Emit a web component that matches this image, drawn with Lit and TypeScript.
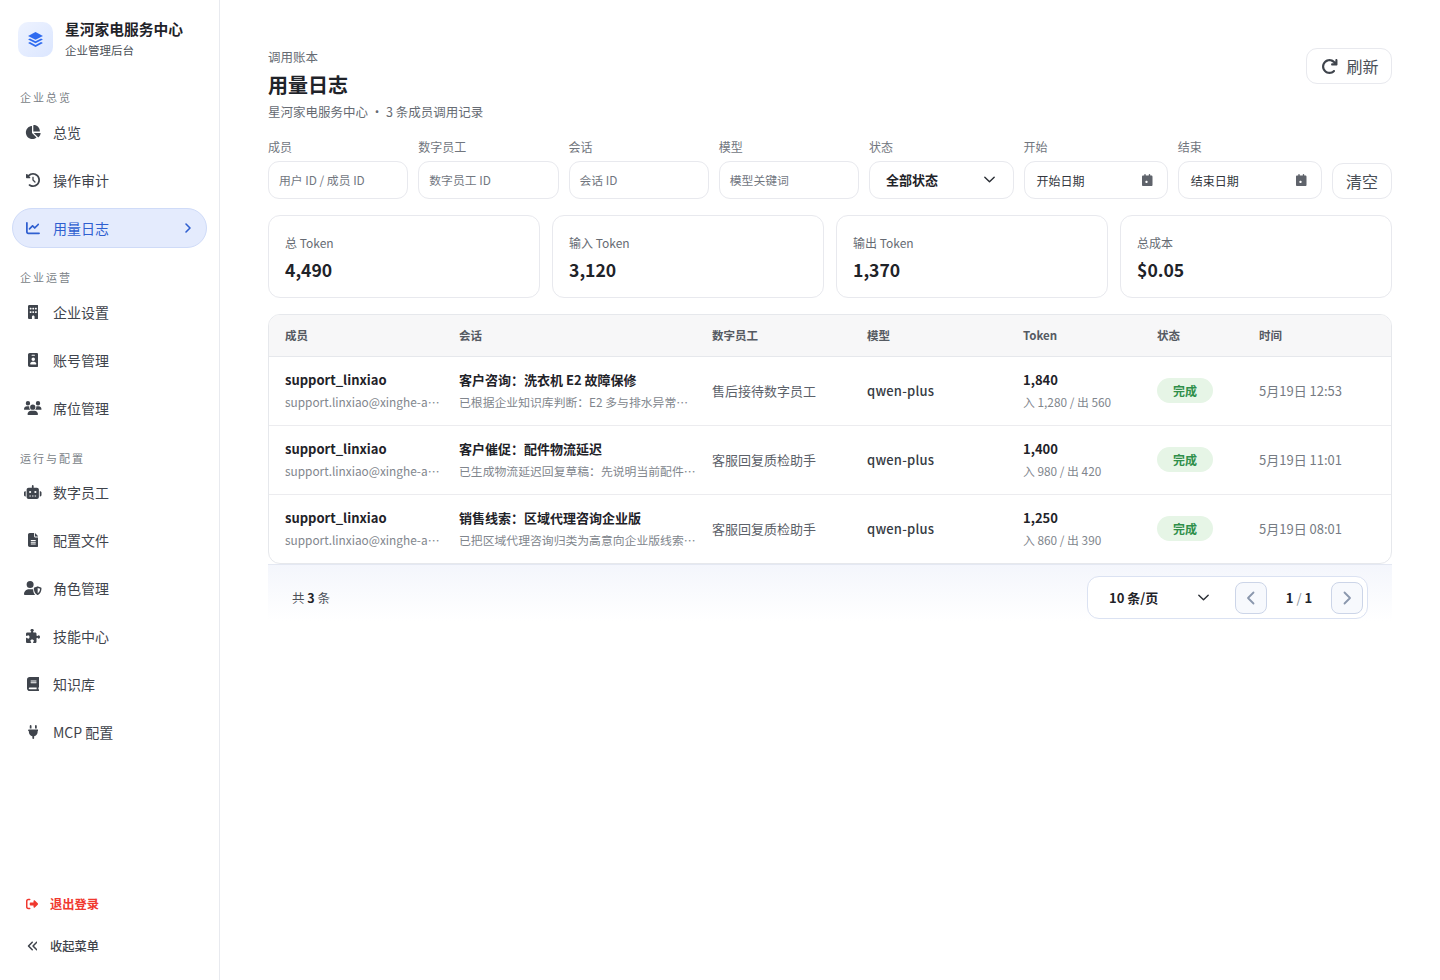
import { LitElement, html, css } from 'lit';
import { customElement } from 'lit/decorators.js';

// [viewBox width, path], all on a 512 high box
const icons: Record<string, [number, string]> = {
  pie: [576, 'M304 240V16.600c0-9 7-16.600 16-16.600C443.700 0 544 100.300 544 224c0 9-7.600 16-16.600 16H304zM32 272C32 150.700 122.100 50.300 239 34.300c9.200-1.300 17 6.100 17 15.400V288L412.500 444.500c6.700 6.700 6.200 17.700-1.500 23.100C371.800 495.600 323.800 512 272 512C139.500 512 32 404.600 32 272zm526.400 16c9.300 0 16.600 7.800 15.400 17c-7.700 55.900-34.600 105.600-73.900 142.300c-6 5.600-15.400 5.200-21.200-.7L320 288H558.400z'],
  history: [512, 'M75 75L41 41C25.900 25.900 0 36.600 0 57.900V168c0 13.300 10.700 24 24 24H134.100c21.400 0 32.100-25.900 17-41l-30.800-30.800C155 85.500 203 64 256 64c106 0 192 86 192 192s-86 192-192 192c-40.800 0-78.600-12.700-109.700-34.400c-14.500-10.100-34.400-6.600-44.600 7.900s-6.600 34.400 7.900 44.600C151.200 495 201.700 512 256 512c141.400 0 256-114.600 256-256S397.400 0 256 0C185.300 0 121.300 28.700 75 75zm181 53c-13.300 0-24 10.700-24 24V256c0 6.400 2.500 12.500 7 17l72 72c9.400 9.400 24.600 9.400 33.900 0s9.400-24.600 0-33.900l-65-65V152c0-13.300-10.700-24-24-24z'],
  chart: [512, 'M64 64c0-17.700-14.300-32-32-32S0 46.300 0 64V400c0 44.200 35.800 80 80 80H480c17.700 0 32-14.300 32-32s-14.300-32-32-32H80c-8.800 0-16-7.200-16-16V64zm406.600 86.600c12.500-12.500 12.500-32.800 0-45.300s-32.800-12.500-45.300 0L320 210.700l-57.400-57.400c-12.500-12.500-32.800-12.500-45.300 0l-112 112c-12.500 12.500-12.500 32.800 0 45.300s32.800 12.500 45.300 0L240 221.300l57.400 57.400c12.500 12.500 32.800 12.500 45.300 0l128-128z'],
  building: [384, 'M48 0C21.500 0 0 21.500 0 48V464c0 26.500 21.500 48 48 48h96V432c0-26.500 21.500-48 48-48s48 21.500 48 48v80h96c26.500 0 48-21.500 48-48V48c0-26.500-21.500-48-48-48H48zM64 240c0-8.800 7.200-16 16-16h32c8.800 0 16 7.200 16 16v32c0 8.800-7.200 16-16 16H80c-8.800 0-16-7.200-16-16V240zm112-16h32c8.800 0 16 7.200 16 16v32c0 8.800-7.200 16-16 16H176c-8.800 0-16-7.200-16-16V240c0-8.800 7.200-16 16-16zm80 16c0-8.800 7.200-16 16-16h32c8.800 0 16 7.200 16 16v32c0 8.800-7.200 16-16 16H272c-8.800 0-16-7.200-16-16V240zM80 96h32c8.800 0 16 7.200 16 16v32c0 8.800-7.200 16-16 16H80c-8.800 0-16-7.200-16-16V112c0-8.800 7.200-16 16-16zm80 16c0-8.800 7.200-16 16-16h32c8.800 0 16 7.200 16 16v32c0 8.800-7.200 16-16 16H176c-8.800 0-16-7.200-16-16V112zM272 96h32c8.800 0 16 7.200 16 16v32c0 8.800-7.200 16-16 16H272c-8.800 0-16-7.200-16-16V112c0-8.800 7.200-16 16-16z'],
  badge: [384, 'M64 0C28.700 0 0 28.700 0 64V448c0 35.300 28.700 64 64 64H320c35.300 0 64-28.700 64-64V64c0-35.300-28.700-64-64-64H64zm96 320h64c44.200 0 80 35.800 80 80c0 8.800-7.200 16-16 16H96c-8.800 0-16-7.200-16-16c0-44.200 35.800-80 80-80zm-32-96a64 64 0 1 1 128 0 64 64 0 1 1 -128 0zM144 64h96c8.800 0 16 7.200 16 16s-7.200 16-16 16H144c-8.800 0-16-7.200-16-16s7.200-16 16-16z'],
  users: [640, 'M144 0a80 80 0 1 1 0 160A80 80 0 1 1 144 0zM512 0a80 80 0 1 1 0 160A80 80 0 1 1 512 0zM0 298.700C0 239.800 47.800 192 106.700 192h42.700c15.900 0 31 3.500 44.600 9.700c-1.300 7.200-1.900 14.700-1.900 22.300c0 38.200 16.800 72.500 43.300 96c-.2 0-.4 0-.7 0H21.300C9.600 320 0 310.400 0 298.700zM405.300 320c-.2 0-.4 0-.7 0c26.600-23.500 43.300-57.800 43.300-96c0-7.600-.7-15-1.900-22.300c13.600-6.300 28.700-9.700 44.600-9.700h42.700C592.200 192 640 239.800 640 298.700c0 11.800-9.600 21.300-21.300 21.300H405.300zM224 224a96 96 0 1 1 192 0 96 96 0 1 1 -192 0zM128 485.300C128 411.700 187.700 352 261.300 352H378.700C452.300 352 512 411.700 512 485.300c0 14.700-11.900 26.700-26.700 26.700H154.700c-14.700 0-26.700-11.900-26.700-26.700z'],
  robot: [640, 'M320 0c17.700 0 32 14.300 32 32V96H472c39.800 0 72 32.200 72 72V440c0 39.800-32.200 72-72 72H168c-39.800 0-72-32.200-72-72V168c0-39.800 32.200-72 72-72H288V32c0-17.700 14.300-32 32-32zM208 384c-8.800 0-16 7.200-16 16s7.200 16 16 16h32c8.800 0 16-7.200 16-16s-7.200-16-16-16H208zm96 0c-8.800 0-16 7.200-16 16s7.200 16 16 16h32c8.800 0 16-7.200 16-16s-7.200-16-16-16H304zm96 0c-8.800 0-16 7.200-16 16s7.200 16 16 16h32c8.800 0 16-7.200 16-16s-7.200-16-16-16H400zM264 256a40 40 0 1 0 -80 0 40 40 0 1 0 80 0zm152 40a40 40 0 1 0 0-80 40 40 0 1 0 0 80zM48 224H64V416H48c-26.500 0-48-21.500-48-48V272c0-26.500 21.500-48 48-48zm544 0c26.500 0 48 21.500 48 48v96c0 26.500-21.500 48-48 48H576V224h16z'],
  file: [384, 'M64 0C28.700 0 0 28.700 0 64V448c0 35.300 28.700 64 64 64H320c35.300 0 64-28.700 64-64V160H256c-17.700 0-32-14.300-32-32V0H64zM256 0V128H384L256 0zM112 256H272c8.800 0 16 7.200 16 16s-7.200 16-16 16H112c-8.800 0-16-7.200-16-16s7.200-16 16-16zm0 64H272c8.800 0 16 7.200 16 16s-7.200 16-16 16H112c-8.800 0-16-7.200-16-16s7.200-16 16-16zm0 64H272c8.800 0 16 7.200 16 16s-7.200 16-16 16H112c-8.800 0-16-7.200-16-16s7.200-16 16-16z'],
  userShield: [640, 'M224 256A128 128 0 1 0 224 0a128 128 0 1 0 0 256zM178 304C80 304 0 384 0 482c0 16 13 30 30 30H410c-44-42-74-112-74-200v-8H178zM488 198a32 32 0 0 1 24 0l108 44c12 5 20 16 20 30 0 90-40 190-128 236a32 32 0 0 1-24 0C400 462 360 362 360 272c0-14 8-25 20-30zm12 62v190c52-30 84-92 88-168z'],
  puzzle: [512, 'M192 104.800c0-9.200-5.800-17.300-13.200-22.800C167.200 73.300 160 61.300 160 48c0-26.500 28.700-48 64-48s64 21.500 64 48c0 13.300-7.200 25.300-18.800 34c-7.400 5.500-13.200 13.600-13.200 22.800c0 12.800 10.400 23.200 23.200 23.200H336c26.500 0 48 21.500 48 48v56.800c0 12.800 10.400 23.200 23.200 23.200c9.200 0 17.300-5.800 22.800-13.200c8.700-11.600 20.700-18.800 34-18.800c26.500 0 48 28.700 48 64s-21.500 64-48 64c-13.300 0-25.300-7.200-34-18.800c-5.500-7.400-13.600-13.200-22.800-13.200c-12.800 0-23.200 10.400-23.200 23.200V464c0 26.500-21.500 48-48 48H279.200c-12.800 0-23.200-10.400-23.200-23.200c0-9.200 5.800-17.300 13.200-22.800c11.600-8.700 18.800-20.700 18.800-34c0-26.500-28.700-48-64-48s-64 21.500-64 48c0 13.300 7.200 25.300 18.800 34c7.400 5.500 13.200 13.600 13.200 22.800c0 12.800-10.400 23.200-23.200 23.200H48c-26.500 0-48-21.500-48-48V343.200C0 330.400 10.400 320 23.200 320c9.200 0 17.300 5.800 22.800 13.200C54.700 344.800 66.700 352 80 352c26.500 0 48-28.700 48-64s-21.500-64-48-64c-13.300 0-25.300 7.200-34 18.800C40.500 250.200 32.400 256 23.200 256C10.400 256 0 245.600 0 232.800V176c0-26.500 21.500-48 48-48H168.800c12.800 0 23.200-10.400 23.200-23.200z'],
  book: [448, 'M96 0C43 0 0 43 0 96V416c0 53 43 96 96 96H384h32c17.700 0 32-14.300 32-32s-14.300-32-32-32V384c17.700 0 32-14.300 32-32V32c0-17.700-14.300-32-32-32H384 96zm0 384H352v64H96c-17.700 0-32-14.300-32-32s14.300-32 32-32zm32-240c0-8.800 7.200-16 16-16H336c8.800 0 16 7.200 16 16s-7.200 16-16 16H144c-8.800 0-16-7.200-16-16zm16 48H336c8.800 0 16 7.200 16 16s-7.200 16-16 16H144c-8.800 0-16-7.200-16-16s7.200-16 16-16z'],
  plug: [384, 'M96 0C78.300 0 64 14.300 64 32v96h64V32c0-17.700-14.300-32-32-32zM288 0c-17.700 0-32 14.300-32 32v96h64V32c0-17.700-14.300-32-32-32zM32 160c-17.700 0-32 14.300-32 32s14.300 32 32 32v32c0 77.400 55 142 128 156.800V480c0 17.700 14.300 32 32 32s32-14.300 32-32V412.800C297 398 352 333.400 352 256V224c17.700 0 32-14.300 32-32s-14.300-32-32-32H32z'],
  logout: [512, 'M377.900 105.900L500.700 228.700c7.200 7.200 11.300 17.100 11.300 27.300s-4.100 20.100-11.300 27.300L377.900 406.100c-6.400 6.400-15 9.900-24 9.900c-18.700 0-33.900-15.200-33.900-33.900l0-62.100-128 0c-17.700 0-32-14.300-32-32l0-64c0-17.700 14.300-32 32-32l128 0 0-62.100c0-18.700 15.200-33.900 33.900-33.900c9 0 17.600 3.600 24 9.900zM160 96L96 96c-17.700 0-32 14.300-32 32l0 256c0 17.700 14.300 32 32 32l64 0c17.700 0 32 14.300 32 32s-14.300 32-32 32l-64 0c-53 0-96-43-96-96L0 128C0 75 43 32 96 32l64 0c17.700 0 32 14.300 32 32s-14.300 32-32 32z'],
  angles: [448, 'M41.400 233.400c-12.500 12.500-12.500 32.800 0 45.300l160 160c12.500 12.500 32.800 12.500 45.300 0s12.500-32.800 0-45.300L109.300 256 246.600 118.600c12.500-12.500 12.500-32.800 0-45.300s-32.800-12.500-45.300 0l-160 160zm352-160l-160 160c-12.500 12.500-12.500 32.800 0 45.300l160 160c12.500 12.500 32.800 12.500 45.300 0s12.500-32.800 0-45.300L301.300 256 438.600 118.600c12.500-12.500 12.500-32.800 0-45.300s-32.800-12.500-45.300 0z'],
  refresh: [512, 'M386.300 160H336c-17.700 0-32 14.300-32 32s14.300 32 32 32H464c17.700 0 32-14.300 32-32V64c0-17.700-14.300-32-32-32s-32 14.300-32 32v51.200L414.400 97.600c-87.500-87.500-229.300-87.500-316.800 0s-87.500 229.300 0 316.800s229.300 87.500 316.800 0c12.500-12.500 12.500-32.800 0-45.300s-32.800-12.500-45.300 0c-62.500 62.500-163.800 62.500-226.300 0s-62.500-163.800 0-226.300s163.800-62.500 226.300 0L386.300 160z'],
  cal: [448, 'M128 0c17.700 0 32 14.300 32 32V64H288V32c0-17.700 14.300-32 32-32s32 14.300 32 32V64h48c26.500 0 48 21.500 48 48V464c0 26.500-21.500 48-48 48H48c-26.500 0-48-21.500-48-48V112C0 85.500 21.500 64 48 64H96V32c0-17.700 14.300-32 32-32zM176 288c-17.700 0-32 14.300-32 32v32c0 17.700 14.300 32 32 32h32c17.700 0 32-14.300 32-32v-32c0-17.700-14.300-32-32-32H176z'],
};

function icon(name: string, size = 14) {
  const [w, d] = icons[name];
  return html`<svg class="ico" viewBox="0 0 ${w} 512" fill="currentColor" aria-hidden="true"
    style="width:${(w / 512) * size}px;height:${size}px"><path d=${d}></path></svg>`;
}

const chevDown = html`<svg class="chev" viewBox="0 0 16 16" fill="none" stroke="currentColor" stroke-width="1.500" stroke-linecap="round" stroke-linejoin="round"><path d="M3 5.500 8 10.500l5-5"/></svg>`;

type NavItem = { label: string; icon: string; active?: boolean };
const nav: { title: string; items: NavItem[] }[] = [
  { title: '企业总览', items: [
    { label: '总览', icon: 'pie' },
    { label: '操作审计', icon: 'history' },
    { label: '用量日志', icon: 'chart', active: true },
  ] },
  { title: '企业运营', items: [
    { label: '企业设置', icon: 'building' },
    { label: '账号管理', icon: 'badge' },
    { label: '席位管理', icon: 'users' },
  ] },
  { title: '运行与配置', items: [
    { label: '数字员工', icon: 'robot' },
    { label: '配置文件', icon: 'file' },
    { label: '角色管理', icon: 'userShield' },
    { label: '技能中心', icon: 'puzzle' },
    { label: '知识库', icon: 'book' },
    { label: 'MCP 配置', icon: 'plug' },
  ] },
];

const stats = [
  ['总 Token', '4,490'],
  ['输入 Token', '3,120'],
  ['输出 Token', '1,370'],
  ['总成本', '$0.05'],
];

const rows = [
  { title: '客户咨询：洗衣机 E2 故障保修', desc: '已根据企业知识库判断：E2 多与排水异常有关，建议先检查排水管', bot: '售后接待数字员工', total: '1,840', io: '入 1,280 / 出 560', time: '5月19日 12:53' },
  { title: '客户催促：配件物流延迟', desc: '已生成物流延迟回复草稿：先说明当前配件到货时间并致歉', bot: '客服回复质检助手', total: '1,400', io: '入 980 / 出 420', time: '5月19日 11:01' },
  { title: '销售线索：区域代理咨询企业版', desc: '已把区域代理咨询归类为高意向企业版线索，并通知销售跟进', bot: '客服回复质检助手', total: '1,250', io: '入 860 / 出 390', time: '5月19日 08:01' },
];

@customElement('app-root')
export class AppRoot extends LitElement {
  static styles = css`
    :host {
      display: block;
      font-family: 'Noto Sans CJK SC', 'Noto Sans', sans-serif;
      color: #1f2329;
      background: #fff;
    }
    * { box-sizing: border-box; }
    .page { display: flex; min-height: 980px; }

    .side {
      width: 220px;
      flex: none;
      height: 980px;
      border-right: 1px solid #e8eaef;
      display: flex;
      flex-direction: column;
    }
    .brand { display: flex; gap: 12px; padding: 18px 18px 0; height: 80px; }
    .logo {
      width: 35px; height: 35px; margin-top: 4px; border-radius: 10px;
      background: linear-gradient(135deg, #eef3ff, #dbe6ff);
      color: #2f6bf0;
      display: flex; align-items: center; justify-content: center;
    }
    .logo svg { width: 17px; height: 17px; }
    .brand b { display: block; font-size: 14.750px; line-height: 22px; font-weight: 700; color: #1f2329; }
    .brand span { display: block; font-size: 11.500px; line-height: 18px; margin-top: 1px; color: #4b5058; }
    .sec {
      font-size: 11px; letter-spacing: 2px; line-height: 16px;
      color: #7a7f87; padding-left: 20px; margin: 9px 0 6.500px;
    }
    .group:nth-of-type(3) .sec { margin: 13px 0 7.500px; }
    .group:nth-of-type(4) .sec { margin: 14px 0 5.500px; }
    .item {
      display: flex; align-items: center; height: 40px; margin: 4px 12px 8px;
      padding: 0 12px; border: 1px solid transparent; border-radius: 20px;
      font-size: 14px; color: #3f444c;
    }
    .slot { width: 16px; height: 16px; margin-right: 12px; flex: none; display: flex; align-items: center; justify-content: center; color: #3f444c; }
    .ico { flex: none; }
    .item.on { background: #e4ebfd; border-color: #cfdbf8; color: #2f5fd0; }
    .item.on .slot { color: #2f5fd0; }
    .item .go { margin-left: auto; margin-right: 0; width: 12px; height: 12px; }
    .foot { margin-top: auto; padding-bottom: 13px; }
    .row {
      display: flex; align-items: center; height: 42px; padding-left: 25px;
      font-size: 12.250px; font-weight: 500; color: #3f444c;
    }
    .foot .slot { width: 14px; margin-right: 11px; }
    .foot .out, .foot .out .slot { color: #f0392f; font-weight: 700; }

    .main { flex: 1; min-width: 0; padding: 48px 48px 0; }
    .head { display: flex; justify-content: space-between; align-items: flex-start; }
    .eyebrow { font-size: 12.500px; line-height: 18px; color: #666b73; }
    h1 { margin: 4px 0 3px; font-size: 20px; line-height: 30px; font-weight: 700; }
    .sub { font-size: 12.500px; line-height: 18px; color: #666b73; }
    button {
      font: inherit; background: #fff; color: #4a4f57; cursor: pointer;
      border: 1px solid #e8e9ee; border-radius: 11px;
    }
    .refresh {
      width: 86px; height: 36px; font-size: 16px; padding: 0 0 0 2px;
      display: flex; align-items: center; justify-content: center; gap: 8px;
    }
    .refresh .ico { color: #3f444c; }

    .filters {
      display: grid; grid-template-columns: repeat(4, 140.250px) 144.600px 144.200px 144.200px 60px;
      gap: 10px; align-items: end; margin-top: 17px;
    }
    .f label { display: block; font-size: 12px; line-height: 17px; color: #71767e; margin-bottom: 6px; }
    .box {
      height: 38px; border: 1px solid #e8e9ee; border-radius: 11px; background: #fff;
      display: flex; align-items: center; justify-content: space-between;
      padding: 0 10px 1px; font-size: 11.840px; color: #72777f;
    }
    .box.sel { padding: 0 16px 2px; font-size: 13px; font-weight: 700; color: #1f2329; }
    .chev { width: 15px; height: 15px; color: #2a2e35; }
    .box.date { padding: 0 14px 0 12px; font-size: 12px; color: #33373e; }
    .box.date .ico { color: #5f636b; }
    .clear { height: 36px; font-size: 16px; padding: 0; }

    .stats { display: grid; grid-template-columns: repeat(4, 1fr); gap: 12px; margin-top: 16px; }
    .stat { height: 83px; border: 1px solid #e8e9ee; border-radius: 12px; padding: 18px 16px 0; }
    .stat span { display: block; font-size: 12px; line-height: 18px; color: #666b73; }
    .stat b { display: block; margin-top: 4px; font-size: 17.600px; line-height: 28px; font-weight: 700; color: #1f2329; }

    .table { margin-top: 16px; border: 1px solid #e6e8ec; border-radius: 12px; overflow: hidden; }
    .tr { display: grid; grid-template-columns: 174px 253px 155px 156px 134px 102px 1fr; padding-left: 16px; align-items: center; }
    .th { height: 42px; padding-bottom: 2px; background: #f7f7f8; border-bottom: 1px solid #e6e8ec; font-size: 11.500px; font-weight: 700; color: #555a62; }
    .td { height: 69px; padding-bottom: 2px; border-bottom: 1px solid #ececef; font-size: 13px; }
    .td:last-child { height: 68px; border-bottom: 0; }
    .cell { padding-top: 1px; }
    .cell b { display: block; line-height: 20px; font-weight: 700; font-size: 13px; color: #1f2329; }
    .cell span { display: block; margin-top: 3px; line-height: 18px; font-size: 11.840px; color: #81868d; white-space: nowrap; overflow: hidden; text-overflow: ellipsis; }
    .name span { width: 157px; }
    .conv span { width: 237px; }
    .bot { color: #5c6169; }
    .model { font-weight: 500; color: #363b43; letter-spacing: .2px; }
    .pill {
      display: inline-flex; align-items: center; justify-content: center; width: 56px; height: 25px;
      border-radius: 13px; background: #e6f5e6; color: #2f8f4a; font-size: 12px; font-weight: 700;
      vertical-align: middle;
    }
    .time { color: #767b83; }

    .pager-row {
      display: flex; justify-content: space-between; align-items: center;
      padding: 11px 24px 12px; background: linear-gradient(#f4f6fc, #fff 85%);
      border-top: 1px solid #e4e8f2;
    }
    .count { font-size: 12.500px; color: #4c5159; }
    .count b { color: #1f2329; font-weight: 700; }
    .pager {
      width: 281px; height: 43px; border: 1px solid #dbe2f2; border-radius: 12px; background: #fff;
      display: flex; align-items: center; padding: 0 4px 0 21px; font-size: 13px;
    }
    .size { font-weight: 700; color: #1f2329; width: 87px; }
    .pager .chev { margin-right: 24px; }
    .nb {
      width: 32px; height: 32px; padding: 0; border: 1px solid #ccd5e8; border-radius: 8px; background: #f7f9fd;
      color: #8a97ad; display: flex; align-items: center; justify-content: center;
    }
    .nb svg { width: 16px; height: 16px; }
    .num { width: 64px; text-align: center; color: #8a8f97; }
    .num b { color: #1f2329; }
  `;

  render() {
    return html`
      <div class="page">
        <aside class="side">
          <div class="brand">
            <div class="logo">
              <svg viewBox="0 0 16 16" fill="currentColor"><path d="M8 1 15 4.600 8 8.200 1 4.600z"/><path d="M2.800 7 8 9.700 13.200 7 15 8 8 11.600 1 8z"/><path d="M2.800 10.400 8 13.100l5.200-2.700 1.800 1L8 15 1 11.400z"/></svg>
            </div>
            <div><b>星河家电服务中心</b><span>企业管理后台</span></div>
          </div>
          ${nav.map((g) => html`
            <div class="group">
              <div class="sec">${g.title}</div>
              ${g.items.map((it) => html`
                <div class="item ${it.active ? 'on' : ''}">
                  <span class="slot">${icon(it.icon)}</span><span>${it.label}</span>
                  ${it.active ? html`<svg class="go" viewBox="0 0 12 12" fill="none" stroke="currentColor" stroke-width="1.600" stroke-linecap="round" stroke-linejoin="round"><path d="M4 2l4 4-4 4"/></svg>` : ''}
                </div>
              `)}
            </div>
          `)}
          <div class="foot">
            <div class="row out"><span class="slot">${icon('logout', 12)}</span>退出登录</div>
            <div class="row"><span class="slot">${icon('angles', 12)}</span>收起菜单</div>
          </div>
        </aside>

        <main class="main">
          <div class="head">
            <div>
              <div class="eyebrow">调用账本</div>
              <h1>用量日志</h1>
              <div class="sub">星河家电服务中心 ・ 3 条成员调用记录</div>
            </div>
            <button class="refresh">${icon('refresh', 17)}刷新</button>
          </div>

          <div class="filters">
            <div class="f"><label>成员</label><div class="box">用户 ID / 成员 ID</div></div>
            <div class="f"><label>数字员工</label><div class="box">数字员工 ID</div></div>
            <div class="f"><label>会话</label><div class="box">会话 ID</div></div>
            <div class="f"><label>模型</label><div class="box">模型关键词</div></div>
            <div class="f"><label>状态</label><div class="box sel">全部状态${chevDown}</div></div>
            <div class="f"><label>开始</label><div class="box date">开始日期${icon('cal', 12)}</div></div>
            <div class="f"><label>结束</label><div class="box date">结束日期${icon('cal', 12)}</div></div>
            <button class="clear">清空</button>
          </div>

          <div class="stats">
            ${stats.map(([k, v]) => html`<div class="stat"><span>${k}</span><b>${v}</b></div>`)}
          </div>

          <div class="table">
            <div class="tr th">
              <div>成员</div><div>会话</div><div>数字员工</div><div>模型</div><div>Token</div><div>状态</div><div>时间</div>
            </div>
            ${rows.map((r) => html`
              <div class="tr td">
                <div class="cell name"><b>support_linxiao</b><span>support.linxiao@xinghe-appliance.com</span></div>
                <div class="cell conv"><b>${r.title}</b><span>${r.desc}</span></div>
                <div class="bot">${r.bot}</div>
                <div class="model">qwen-plus</div>
                <div class="cell tok"><b>${r.total}</b><span>${r.io}</span></div>
                <div><span class="pill">完成</span></div>
                <div class="time">${r.time}</div>
              </div>
            `)}
          </div>

          <div class="pager-row">
            <div class="count">共 <b>3</b> 条</div>
            <div class="pager">
              <span class="size">10 条/页</span>${chevDown}
              <button class="nb"><svg viewBox="0 0 16 16" fill="none" stroke="currentColor" stroke-width="1.800" stroke-linecap="round" stroke-linejoin="round"><path d="M10.500 2.500 5 8l5.500 5.500"/></svg></button>
              <span class="num"><b>1</b> / <b>1</b></span>
              <button class="nb"><svg viewBox="0 0 16 16" fill="none" stroke="currentColor" stroke-width="1.800" stroke-linecap="round" stroke-linejoin="round"><path d="M5.500 2.500 11 8l-5.500 5.500"/></svg></button>
            </div>
          </div>
        </main>
      </div>
    `;
  }
}
